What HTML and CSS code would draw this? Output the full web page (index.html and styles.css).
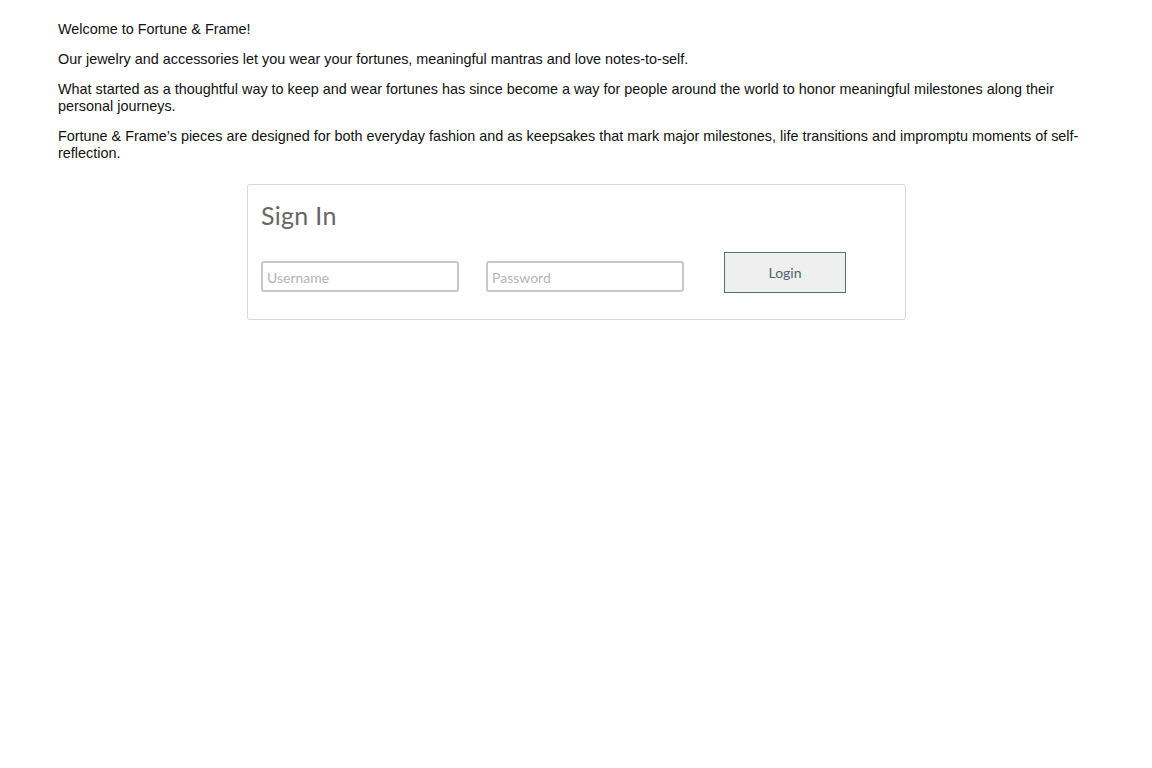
FILE: index.html
```html
<!DOCTYPE html>
<html lang="en">
<head>
<meta charset="utf-8">
<title>Fortune &amp; Frame</title>
<link rel="stylesheet" href="styles.css">
</head>
<body>
<div class="intro">
  <p>Welcome to Fortune &amp; Frame!</p>
  <p>Our jewelry and accessories let you wear your fortunes, meaningful mantras and love notes-to-self.</p>
  <p>What started as a thoughtful way to keep and wear fortunes has since become a way for people around the world to honor meaningful milestones along their personal journeys.</p>
  <p>Fortune &amp; Frame’s pieces are designed for both everyday fashion and as keepsakes that mark major milestones, life transitions and impromptu moments of self-reflection.</p>
</div>
<div class="signin">
  <h1 class="title">Sign In</h1>
  <form class="row">
    <input class="field" type="text" placeholder="Username">
    <input class="field" type="password" placeholder="Password">
    <button class="login" type="button">Login</button>
  </form>
</div>
</body>
</html>
```

FILE: styles.css
```css
html, body {
  margin: 0;
  padding: 0;
  background: #fff;
}
body {
  font-family: "Liberation Sans", Arial, sans-serif;
  color: #111;
}
.intro {
  margin: 0 58px;
  padding-top: 21px;
  height: 138px;
  overflow: hidden;
  font-size: 14.4px;
  line-height: 17px;
}
.intro p {
  margin: 0 0 13px 0;
}
.signin {
  box-sizing: border-box;
  width: 659px;
  height: 136px;
  margin: 25px 0 0 247px;
  border: 1px solid #d8d8d8;
  border-radius: 3px;
  padding: 15px 0 0 13px;
  font-family: Lato, "Noto Sans", sans-serif;
}
.title {
  margin: 0;
  font-size: 25px;
  font-weight: 400;
  color: #666;
  line-height: 30px;
  letter-spacing: 0.3px;
}
.row {
  display: flex;
  align-items: flex-start;
  margin-top: 22px;
}
.field {
  box-sizing: border-box;
  width: 198px;
  height: 31px;
  margin-top: 9px;
  border: 2px solid #c8c8c8;
  border-radius: 3px;
  padding: 2px 4px 0;
  font-family: Lato, "Noto Sans", sans-serif;
  font-size: 14px;
  color: #555;
  outline: none;
}
.field + .field {
  margin-left: 27px;
}
.field::placeholder {
  color: #b4b4b4;
}
.login {
  box-sizing: border-box;
  width: 122px;
  height: 41px;
  margin-left: 40px;
  background: #efefef;
  border: 1px solid #56707c;
  border-radius: 0;
  font-family: Lato, "Noto Sans", sans-serif;
  font-size: 14px;
  color: #4b6471;
  padding: 0;
}
```
